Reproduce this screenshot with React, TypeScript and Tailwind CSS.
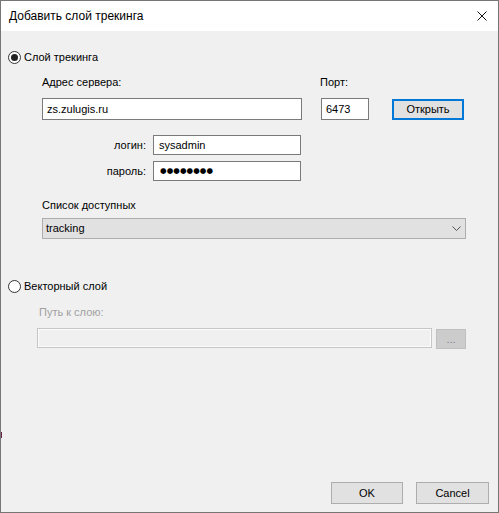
import React from "react";

function Radio({ checked }: { checked: boolean }) {
  return (
    <div className="w-[13px] h-[13px] rounded-full border border-[#333333] bg-white flex items-center justify-center shrink-0">
      {checked && <div className="w-[7px] h-[7px] rounded-full bg-[#222222]" />}
    </div>
  );
}

export default function App() {
  return (
    <div className="relative w-[499px] h-[513px] border border-[#767676] flex flex-col font-['Liberation_Sans',Arial,sans-serif] text-[11px] text-black overflow-hidden">
      <div className="absolute left-0 top-[431px] w-[1px] h-[6px] bg-[#6a2444]" />
      <div className="h-[30px] bg-white flex items-center justify-between pl-[8px] pr-[11px] shrink-0">
        <span className="text-[12px]">Добавить слой трекинга</span>
        <svg width="10" height="10" viewBox="0 0 10 10">
          <path d="M0.5 0.5 L9.5 9.5 M9.5 0.5 L0.5 9.5" stroke="#111" strokeWidth="1" />
        </svg>
      </div>
      <div className="flex-1 bg-[#f0f0f0] flex flex-col">
        <div className="mt-[19px] pl-[7px] h-[14px] flex items-center gap-[3px]">
          <Radio checked />
          <span className="leading-[13px]">Слой трекинга</span>
        </div>
        <div className="mt-[12px] ml-[41px] h-[13px] flex leading-[13px]">
          <span className="w-[278px]">Адрес сервера:</span>
          <span>Порт:</span>
        </div>
        <div className="mt-[9px] ml-[41px] flex items-start">
          <div className="w-[260px] h-[22px] bg-white border border-[#7a7a7a] flex items-center pl-[4px]">zs.zulugis.ru</div>
          <div className="ml-[19px] w-[48px] h-[22px] bg-white border border-[#7a7a7a] flex items-center pl-[4px]">6473</div>
          <button className="ml-[23px] mt-[1px] w-[72px] h-[21px] bg-[#e1e1e1] border-2 border-[#0078d7] flex items-center justify-center">Открыть</button>
        </div>
        <div className="mt-[15px] ml-[41px] h-[20px] flex items-center">
          <span className="w-[104px] text-right">логин:</span>
          <div className="ml-[7px] w-[148px] h-[20px] bg-white border border-[#7a7a7a] flex items-center pl-[5px]">sysadmin</div>
        </div>
        <div className="mt-[6px] ml-[41px] h-[20px] flex items-center">
          <span className="w-[104px] text-right">пароль:</span>
          <div className="ml-[7px] w-[148px] h-[20px] bg-white border border-[#7a7a7a] flex items-center pl-[6px]">
            <span className="font-['DejaVu_Sans',sans-serif] text-[7.5px] tracking-[0.1px] leading-none">●●●●●●●●</span>
          </div>
        </div>
        <div className="mt-[18px] ml-[41px] h-[13px] leading-[13px]">Список доступных</div>
        <div className="mt-[6px] ml-[41px] w-[424px] h-[21px] bg-[#e1e1e1] border border-[#adadad] flex items-center justify-between pl-[3px] pr-[4px]">
          <span>tracking</span>
          <svg width="9" height="5" viewBox="0 0 9 5">
            <path d="M0.5 0.5 L4.5 4.5 L8.5 0.5" stroke="#555" strokeWidth="1" fill="none" />
          </svg>
        </div>
        <div className="mt-[40px] pl-[7px] h-[14px] flex items-center gap-[3px]">
          <Radio checked={false} />
          <span className="leading-[13px]">Векторный слой</span>
        </div>
        <div className="mt-[13px] ml-[38px] h-[13px] leading-[13px] text-[#a0a0a0]">Путь к слою:</div>
        <div className="mt-[9px] ml-[36px] flex items-start">
          <div className="w-[395px] h-[20px] border border-[#c6c6c6] bg-[#f0f0f0] shadow-[inset_0_0_0_1px_#fbfbfb]" />
          <div className="ml-[4px] mt-[1px] w-[30px] h-[20px] bg-[#cccccc] border border-[#bfbfbf] flex items-center justify-center text-[#838383]">...</div>
        </div>
        <div className="flex-1" />
        <div className="flex justify-end gap-[13px] pr-[9px] pb-[8px]">
          <button className="w-[72px] h-[22px] bg-[#e1e1e1] border border-[#adadad] flex items-center justify-center">OK</button>
          <button className="w-[73px] h-[22px] bg-[#e1e1e1] border border-[#adadad] flex items-center justify-center">Cancel</button>
        </div>
      </div>
    </div>
  );
}
